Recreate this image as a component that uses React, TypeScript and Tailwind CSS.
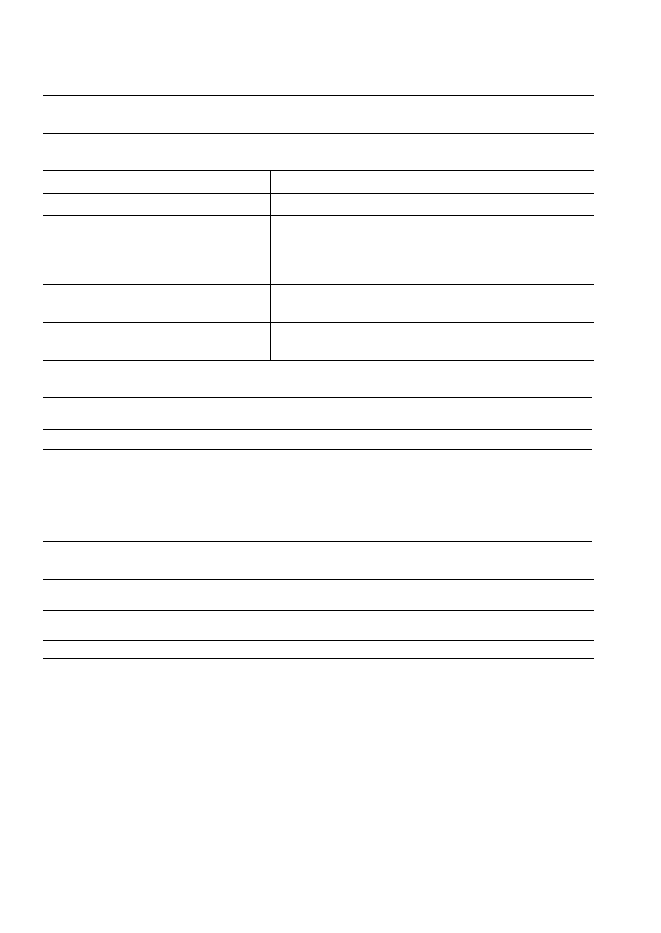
const tableRows = [23, 22, 69, 38, 38];

function Rule({ h, inset = false, last = false }: { h: number; inset?: boolean; last?: boolean }) {
  return (
    <div
      className={`border-t border-black ${inset ? "mr-[1.5px]" : ""} ${last ? "border-b" : ""}`}
      style={{ height: h }}
    />
  );
}

export default function App() {
  return (
    <div className="min-h-screen bg-white font-['Liberation_Sans',sans-serif]">
      <div className="w-[593.5px] pl-[43px] pt-[95px]">
        {/* heading lines */}
        <Rule h={38} />
        <Rule h={37} />

        {/* two column table */}
        <div className="border-b border-black">
          {tableRows.map((h, i) => (
            <div key={i} className="grid grid-cols-[227px_1fr] border-t border-black" style={{ height: h }}>
              <div />
              <div className="border-l border-black" />
            </div>
          ))}
        </div>

        <div className="h-[36px]" />

        {/* lower block */}
        <Rule h={32} inset />
        <Rule h={20} inset />
        <Rule h={92} inset />
        <Rule h={38} inset />
        <Rule h={31} />
        <Rule h={30} />
        <Rule h={19} last />
      </div>
    </div>
  );
}
